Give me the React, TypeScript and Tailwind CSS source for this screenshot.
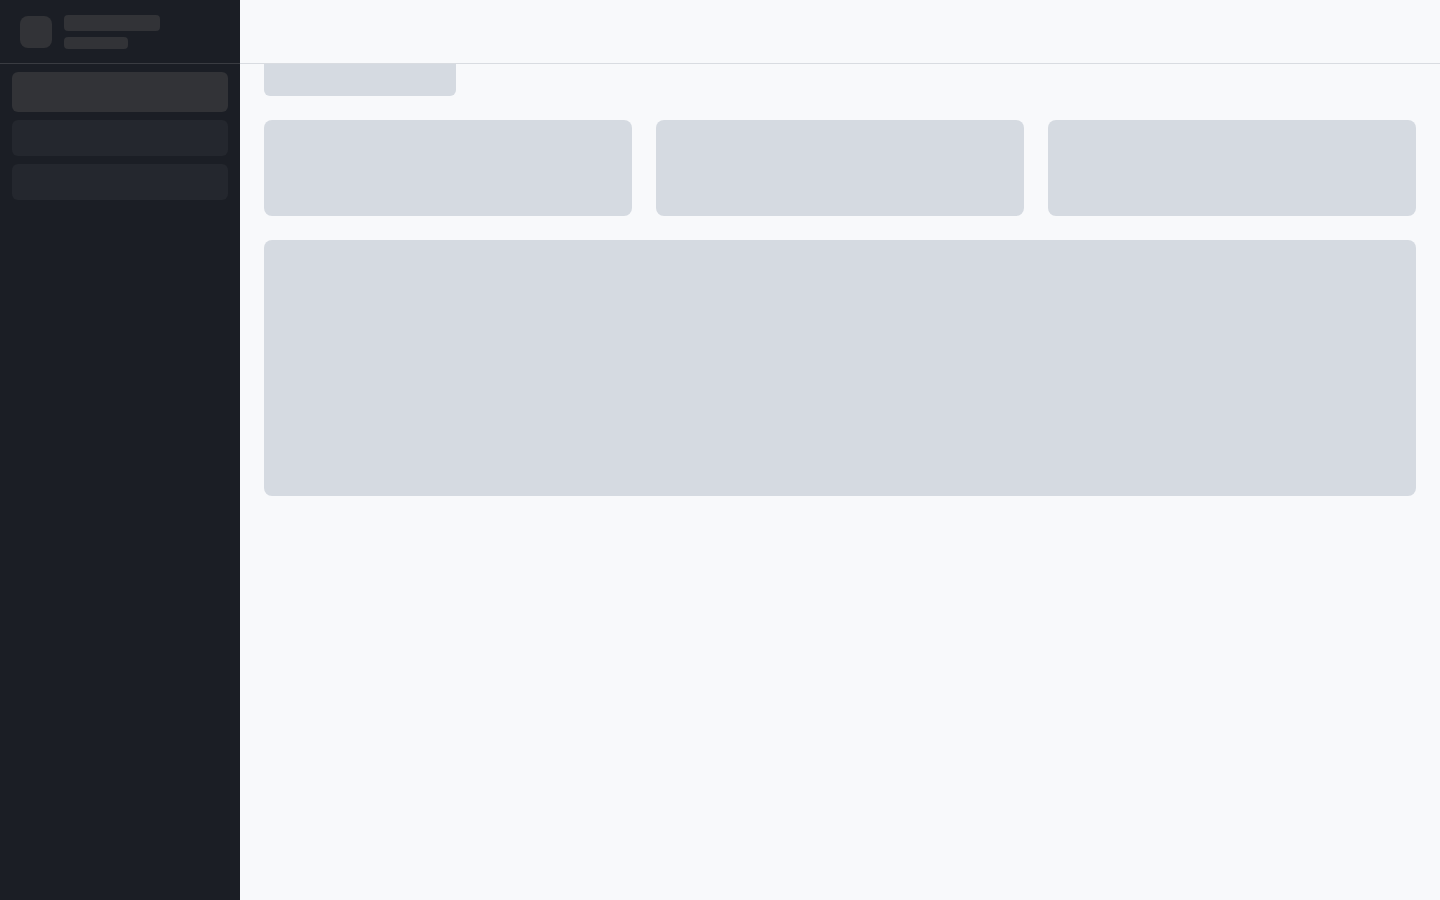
export default function App() {
  return (
    <div className="flex h-[900px] w-[1440px] overflow-hidden bg-[#f8f9fb]" style={{ fontFamily: '"Liberation Sans", sans-serif' }}>
      <aside className="flex w-[240px] shrink-0 flex-col bg-[#1b1e25]">
        <div className="flex h-[64px] items-start gap-3 border-b border-[#3a3c42] px-5">
          <div className="mt-4 h-8 w-8 rounded-lg bg-[#323337]" />
          <div className="mt-[15px] flex flex-col gap-[6px]">
            <div className="h-4 w-24 rounded bg-[#323337]" />
            <div className="h-3 w-16 rounded bg-[#323337]" />
          </div>
        </div>
        <nav className="flex flex-col gap-2 px-3 pt-2">
          <div className="h-10 rounded-md bg-[#323337]" />
          <div className="h-9 rounded-md bg-[#24272e]" />
          <div className="h-9 rounded-md bg-[#24272e]" />
        </nav>
      </aside>
      <main className="flex flex-1 flex-col">
        <header className="h-[64px] shrink-0 border-b border-[#d9dce1] bg-[#f8f9fb]" />
        <div className="flex flex-col px-6">
          <div className="h-8 w-48 rounded-b-md bg-[#d5dae1]" />
          <div className="mt-6 grid grid-cols-3 gap-6">
            <div className="h-24 rounded-lg bg-[#d5dae1]" />
            <div className="h-24 rounded-lg bg-[#d5dae1]" />
            <div className="h-24 rounded-lg bg-[#d5dae1]" />
          </div>
          <div className="mt-6 h-64 rounded-lg bg-[#d5dae1]" />
        </div>
      </main>
    </div>
  );
}
